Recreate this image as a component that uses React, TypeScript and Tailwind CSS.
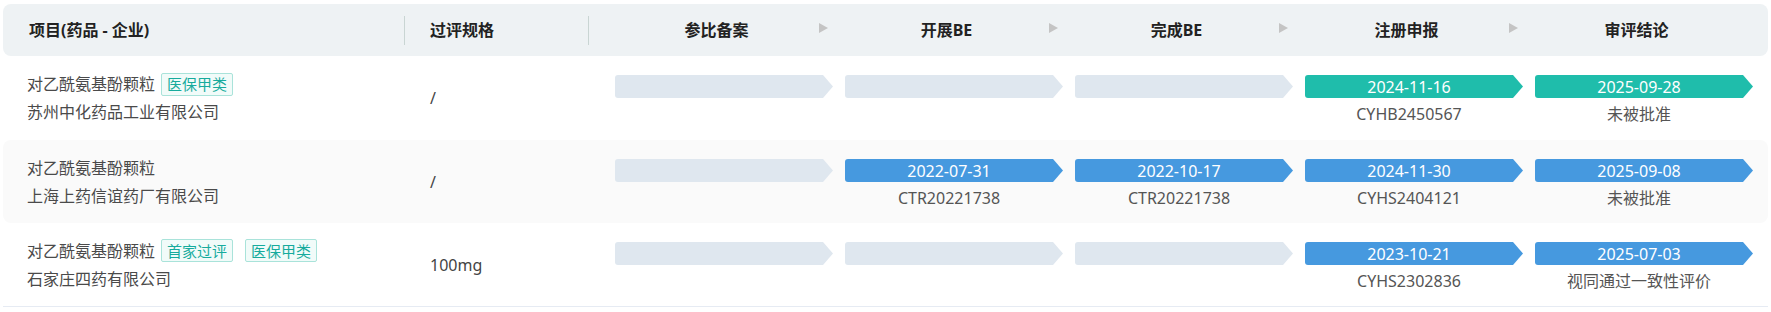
import React from 'react';

// --- Kiểu dữ liệu cho từng bước ---
type Step = { date: string; code: string; tone: 'teal' | 'blue' } | null;

type Row = {
  name: string;
  tags: string[];
  company: string;
  spec: string;
  steps: Step[];
};

const stepTitles = ['参比备案', '开展BE', '完成BE', '注册申报', '审评结论'];

const rows: Row[] = [
  {
    name: '对乙酰氨基酚颗粒',
    tags: ['医保甲类'],
    company: '苏州中化药品工业有限公司',
    spec: '/',
    steps: [
      null,
      null,
      null,
      { date: '2024-11-16', code: 'CYHB2450567', tone: 'teal' },
      { date: '2025-09-28', code: '未被批准', tone: 'teal' },
    ],
  },
  {
    name: '对乙酰氨基酚颗粒',
    tags: [],
    company: '上海上药信谊药厂有限公司',
    spec: '/',
    steps: [
      null,
      { date: '2022-07-31', code: 'CTR20221738', tone: 'blue' },
      { date: '2022-10-17', code: 'CTR20221738', tone: 'blue' },
      { date: '2024-11-30', code: 'CYHS2404121', tone: 'blue' },
      { date: '2025-09-08', code: '未被批准', tone: 'blue' },
    ],
  },
  {
    name: '对乙酰氨基酚颗粒',
    tags: ['首家过评', '医保甲类'],
    company: '石家庄四药有限公司',
    spec: '100mg',
    steps: [
      null,
      null,
      null,
      { date: '2023-10-21', code: 'CYHS2302836', tone: 'blue' },
      { date: '2025-07-03', code: '视同通过一致性评价', tone: 'blue' },
    ],
  },
];

// --- Thanh mũi tên cho mỗi bước ---
const StepBar = ({ step }: { step: Step }) => {
  const tone = !step ? 'bg-[#dfe7ef]' : step.tone === 'teal' ? 'bg-[#1fbdab]' : 'bg-[#4699df]';
  return (
    <div className="flex flex-col w-[218px]">
      <div
        className={`h-[23px] rounded-l-[3px] pr-[10px] flex items-center justify-center text-white text-[16px] [clip-path:polygon(0_0,calc(100%_-_10px)_0,100%_50%,calc(100%_-_10px)_100%,0_100%)] ${tone}`}
      >
        {step?.date}
      </div>
      {step && (
        <div className="mt-[6px] pr-[10px] h-[20px] leading-[20px] text-center text-[16px] text-[#555]">{step.code}</div>
      )}
    </div>
  );
};

export default function App() {
  return (
    <div className="bg-white w-[1771px] h-[312px] pt-[4px] px-[3px] font-['Noto_Sans','Noto_Sans_CJK_SC',sans-serif]">
      {/* --- Hàng tiêu đề --- */}
      <div className="h-[52px] rounded-[8px] bg-[#eef2f4] flex items-center text-[16px] font-bold text-[#222]">
        <div className="w-[401px] pl-[26px]">项目(药品 - 企业)</div>
        <div className="w-[184px] h-[29px] border-l border-[#c9d5d3] pl-[25px] flex items-center">过评规格</div>
        <div className="h-[29px] border-l border-[#c9d5d3] pl-[13px] flex">
          {stepTitles.map((t, i) => (
            <div key={t} className="w-[230px] pl-[12px] flex items-center">
              <div className="flex-1 text-center">{t}</div>
              {i < 4 ? (
                <div className="w-0 h-0 mr-[4px] mb-[5px] border-y-[5.5px] border-y-transparent border-l-[9px] border-l-[#c4c4c4]" />
              ) : (
                <div className="w-[13px]" />
              )}
            </div>
          ))}
        </div>
      </div>

      {/* --- Các hàng dữ liệu --- */}
      {rows.map((row, ri) => (
        <div
          key={ri}
          className={`flex ${ri === 0 ? 'h-[84px]' : 'h-[83px]'} ${ri === 1 ? 'bg-[#fafafa] rounded-[8px]' : ''} ${
            ri === 2 ? 'h-[84px] border-b border-[#e6ebf3]' : ''
          }`}
        >
          <div className="w-[401px] pl-[24px] flex flex-col justify-center text-[16px] leading-[28px] text-[#4a4a4a]">
            <div className="flex items-center">
              <span>{row.name}</span>
              {row.tags.map((tag) => (
                <span
                  key={tag}
                  className="ml-[6px] mr-[6px] h-[23px] px-[5px] flex items-center border border-[#a9e3da] bg-[#f1fbf9] rounded-[2px] text-[15px] text-[#17ab9d]"
                >
                  {tag}
                </span>
              ))}
            </div>
            <div>{row.company}</div>
          </div>
          <div className="w-[185px] pl-[26px] flex items-center text-[16px] text-[#444]">{row.spec}</div>
          <div className="pl-[14px] pt-[19px] flex">
            {row.steps.map((s, si) => (
              <div key={si} className="w-[230px] pl-[12px]">
                <StepBar step={s} />
              </div>
            ))}
          </div>
        </div>
      ))}
    </div>
  );
}
